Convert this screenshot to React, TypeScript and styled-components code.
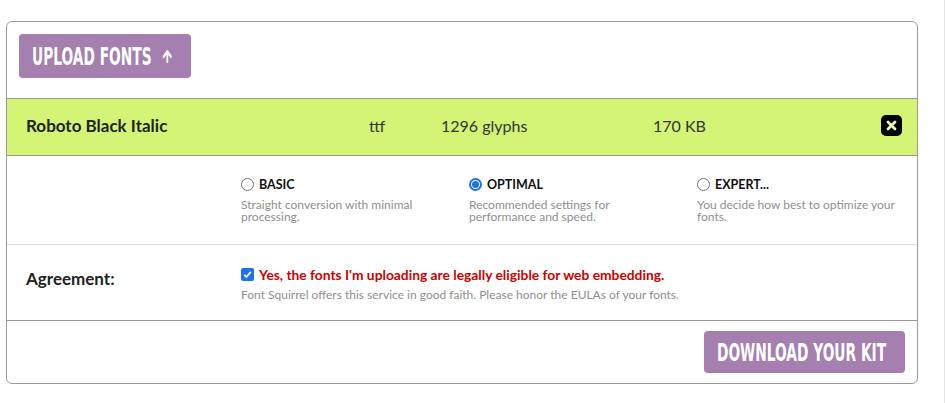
import styled, { createGlobalStyle } from "styled-components";

const GlobalStyle = createGlobalStyle`
  html, body {
    margin: 0;
    padding: 0;
    background: #fff;
    font-family: "Lato", "Open Sans", sans-serif;
    color: #222;
  }
`;

const Page = styled.div`
  width: 945px;
  height: 403px;
  padding: 21px 0 0 6px;
  box-sizing: border-box;
  border-right: 1px solid #e4e4e4;
`;

const Card = styled.div`
  width: 912px;
  height: 363px;
  box-sizing: border-box;
  border: 1px solid #9a9a9a;
  border-radius: 6px;
  display: flex;
  flex-direction: column;
  overflow: hidden;
`;

const Header = styled.div`
  height: 76px;
  padding: 12px 12px 0;
  box-sizing: border-box;
`;

const PurpleButton = styled.button<{ $h: number; $w: number }>`
  width: ${(p) => p.$w}px;
  height: ${(p) => p.$h}px;
  border: none;
  border-radius: 4px;
  background: #a47faf;
  color: #fff;
  padding: 0 0 0 13px;
  display: inline-flex;
  align-items: center;
  white-space: nowrap;
  overflow: visible;
  cursor: pointer;
`;

const ButtonText = styled.span<{ $size: number }>`
  font-family: "DejaVu Sans", sans-serif;
  font-weight: 700;
  font-size: ${(p) => p.$size}px;
  display: inline-flex;
  align-items: center;
  gap: 19px;
  white-space: nowrap;
  transform: scaleX(0.55);
  transform-origin: left center;
`;

const FileRow = styled.div`
  height: 58px;
  box-sizing: border-box;
  border-top: 1px solid #9a9a9a;
  border-bottom: 1px solid #9a9a9a;
  background: #d4f476;
  display: grid;
  grid-template-columns: 343px 72px 212px 1fr 22px;
  align-items: center;
  padding: 0 14px 3px 19px;
  font-size: 16px;
`;

const FileName = styled.span`
  font-weight: 700;
  font-size: 17px;
`;

const Cell = styled.span`
  color: #333;
`;

const CloseBox = styled.span`
  width: 21px;
  height: 21px;
  border-radius: 5px;
  background: #000;
  display: flex;
  align-items: center;
  justify-content: center;
`;

const OptionsRow = styled.div`
  height: 89px;
  box-sizing: border-box;
  border-bottom: 1px solid #dedede;
  display: grid;
  grid-template-columns: 234px repeat(3, 228px);
  padding-top: 21px;
`;

const Option = styled.label<{ $w?: number }>`
  display: flex;
  flex-direction: column;
  width: ${(p) => p.$w ?? 200}px;
`;

const OptionHead = styled.span`
  display: flex;
  align-items: center;
  gap: 5px;
  font-size: 12.5px;
  font-weight: 700;
  color: #111;
  text-transform: uppercase;
`;

const Radio = styled.span<{ $on?: boolean }>`
  width: 13px;
  height: 13px;
  box-sizing: border-box;
  border-radius: 50%;
  border: ${(p) => (p.$on ? "2px solid #1a73e8" : "1px solid #767676")};
  background: #fff;
  display: flex;
  align-items: center;
  justify-content: center;
  &::after {
    content: "";
    display: ${(p) => (p.$on ? "block" : "none")};
    width: 7px;
    height: 7px;
    border-radius: 50%;
    background: #1a73e8;
  }
`;

const Desc = styled.span<{ $gap: number }>`
  margin-top: ${(p) => p.$gap}px;
  font-size: 12px;
  line-height: 12px;
  color: #8f8f8f;
  white-space: normal;
`;

const AgreementRow = styled.div`
  height: 76px;
  box-sizing: border-box;
  border-bottom: 1px solid #9a9a9a;
  display: grid;
  grid-template-columns: 234px 1fr;
  padding-top: 21px;
`;

const RowLabel = styled.span`
  padding-left: 19px;
  font-size: 17px;
  font-weight: 700;
  padding-top: 2px;
`;

const AgreeHead = styled.span`
  display: flex;
  align-items: center;
  gap: 5px;
  font-size: 13.8px;
  font-weight: 700;
  color: #cc0000;
  white-space: nowrap;
`;

const CheckBox = styled.span`
  width: 13px;
  height: 13px;
  border-radius: 2px;
  background: #1a73e8;
  display: flex;
  align-items: center;
  justify-content: center;
`;

const Footer = styled.div`
  flex: 1;
  display: flex;
  justify-content: flex-end;
  align-items: flex-start;
  padding: 10px 12px 0 0;
`;

export default function App() {
  return (
    <>
      <GlobalStyle />
      <Page>
        <Card>
          <Header>
            <PurpleButton $h={44} $w={172}>
              <ButtonText $size={25}>
                UPLOAD FONTS
                <svg width="20" height="13" viewBox="0 0 20 13">
                  <path
                    d="M10 13V2M2.5 7.5L10 1.5l7.5 6"
                    stroke="#fff"
                    strokeWidth="3.2"
                    fill="none"
                  />
                </svg>
              </ButtonText>
            </PurpleButton>
          </Header>
          <FileRow>
            <FileName>Roboto Black Italic</FileName>
            <Cell>ttf</Cell>
            <Cell>1296 glyphs</Cell>
            <Cell>170 KB</Cell>
            <CloseBox>
              <svg width="11" height="11" viewBox="0 0 11 11">
                <path
                  d="M2 2l7 7M9 2l-7 7"
                  stroke="#e8f7c0"
                  strokeWidth="2.8"
                  strokeLinecap="round"
                />
              </svg>
            </CloseBox>
          </FileRow>
          <OptionsRow>
            <span />
            <Option>
              <OptionHead>
                <Radio />
                Basic
              </OptionHead>
              <Desc $gap={7}>Straight conversion with minimal processing.</Desc>
            </Option>
            <Option>
              <OptionHead>
                <Radio $on />
                Optimal
              </OptionHead>
              <Desc $gap={7}>Recommended settings for performance and speed.</Desc>
            </Option>
            <Option>
              <OptionHead>
                <Radio />
                Expert...
              </OptionHead>
              <Desc $gap={7}>You decide how best to optimize your fonts.</Desc>
            </Option>
          </OptionsRow>
          <AgreementRow>
            <RowLabel>Agreement:</RowLabel>
            <Option $w={600}>
              <AgreeHead>
                <CheckBox>
                  <svg width="9" height="9" viewBox="0 0 9 9">
                    <path
                      d="M1.2 4.8l2.2 2.2L7.8 1.8"
                      stroke="#fff"
                      strokeWidth="1.8"
                      fill="none"
                    />
                  </svg>
                </CheckBox>
                Yes, the fonts I'm uploading are legally eligible for web
                embedding.
              </AgreeHead>
              <Desc $gap={6}>
                Font Squirrel offers this service in good faith. Please honor
                the EULAs of your fonts.
              </Desc>
            </Option>
          </AgreementRow>
          <Footer>
            <PurpleButton $h={42} $w={201}>
              <ButtonText $size={25}>DOWNLOAD YOUR KIT</ButtonText>
            </PurpleButton>
          </Footer>
        </Card>
      </Page>
    </>
  );
}
